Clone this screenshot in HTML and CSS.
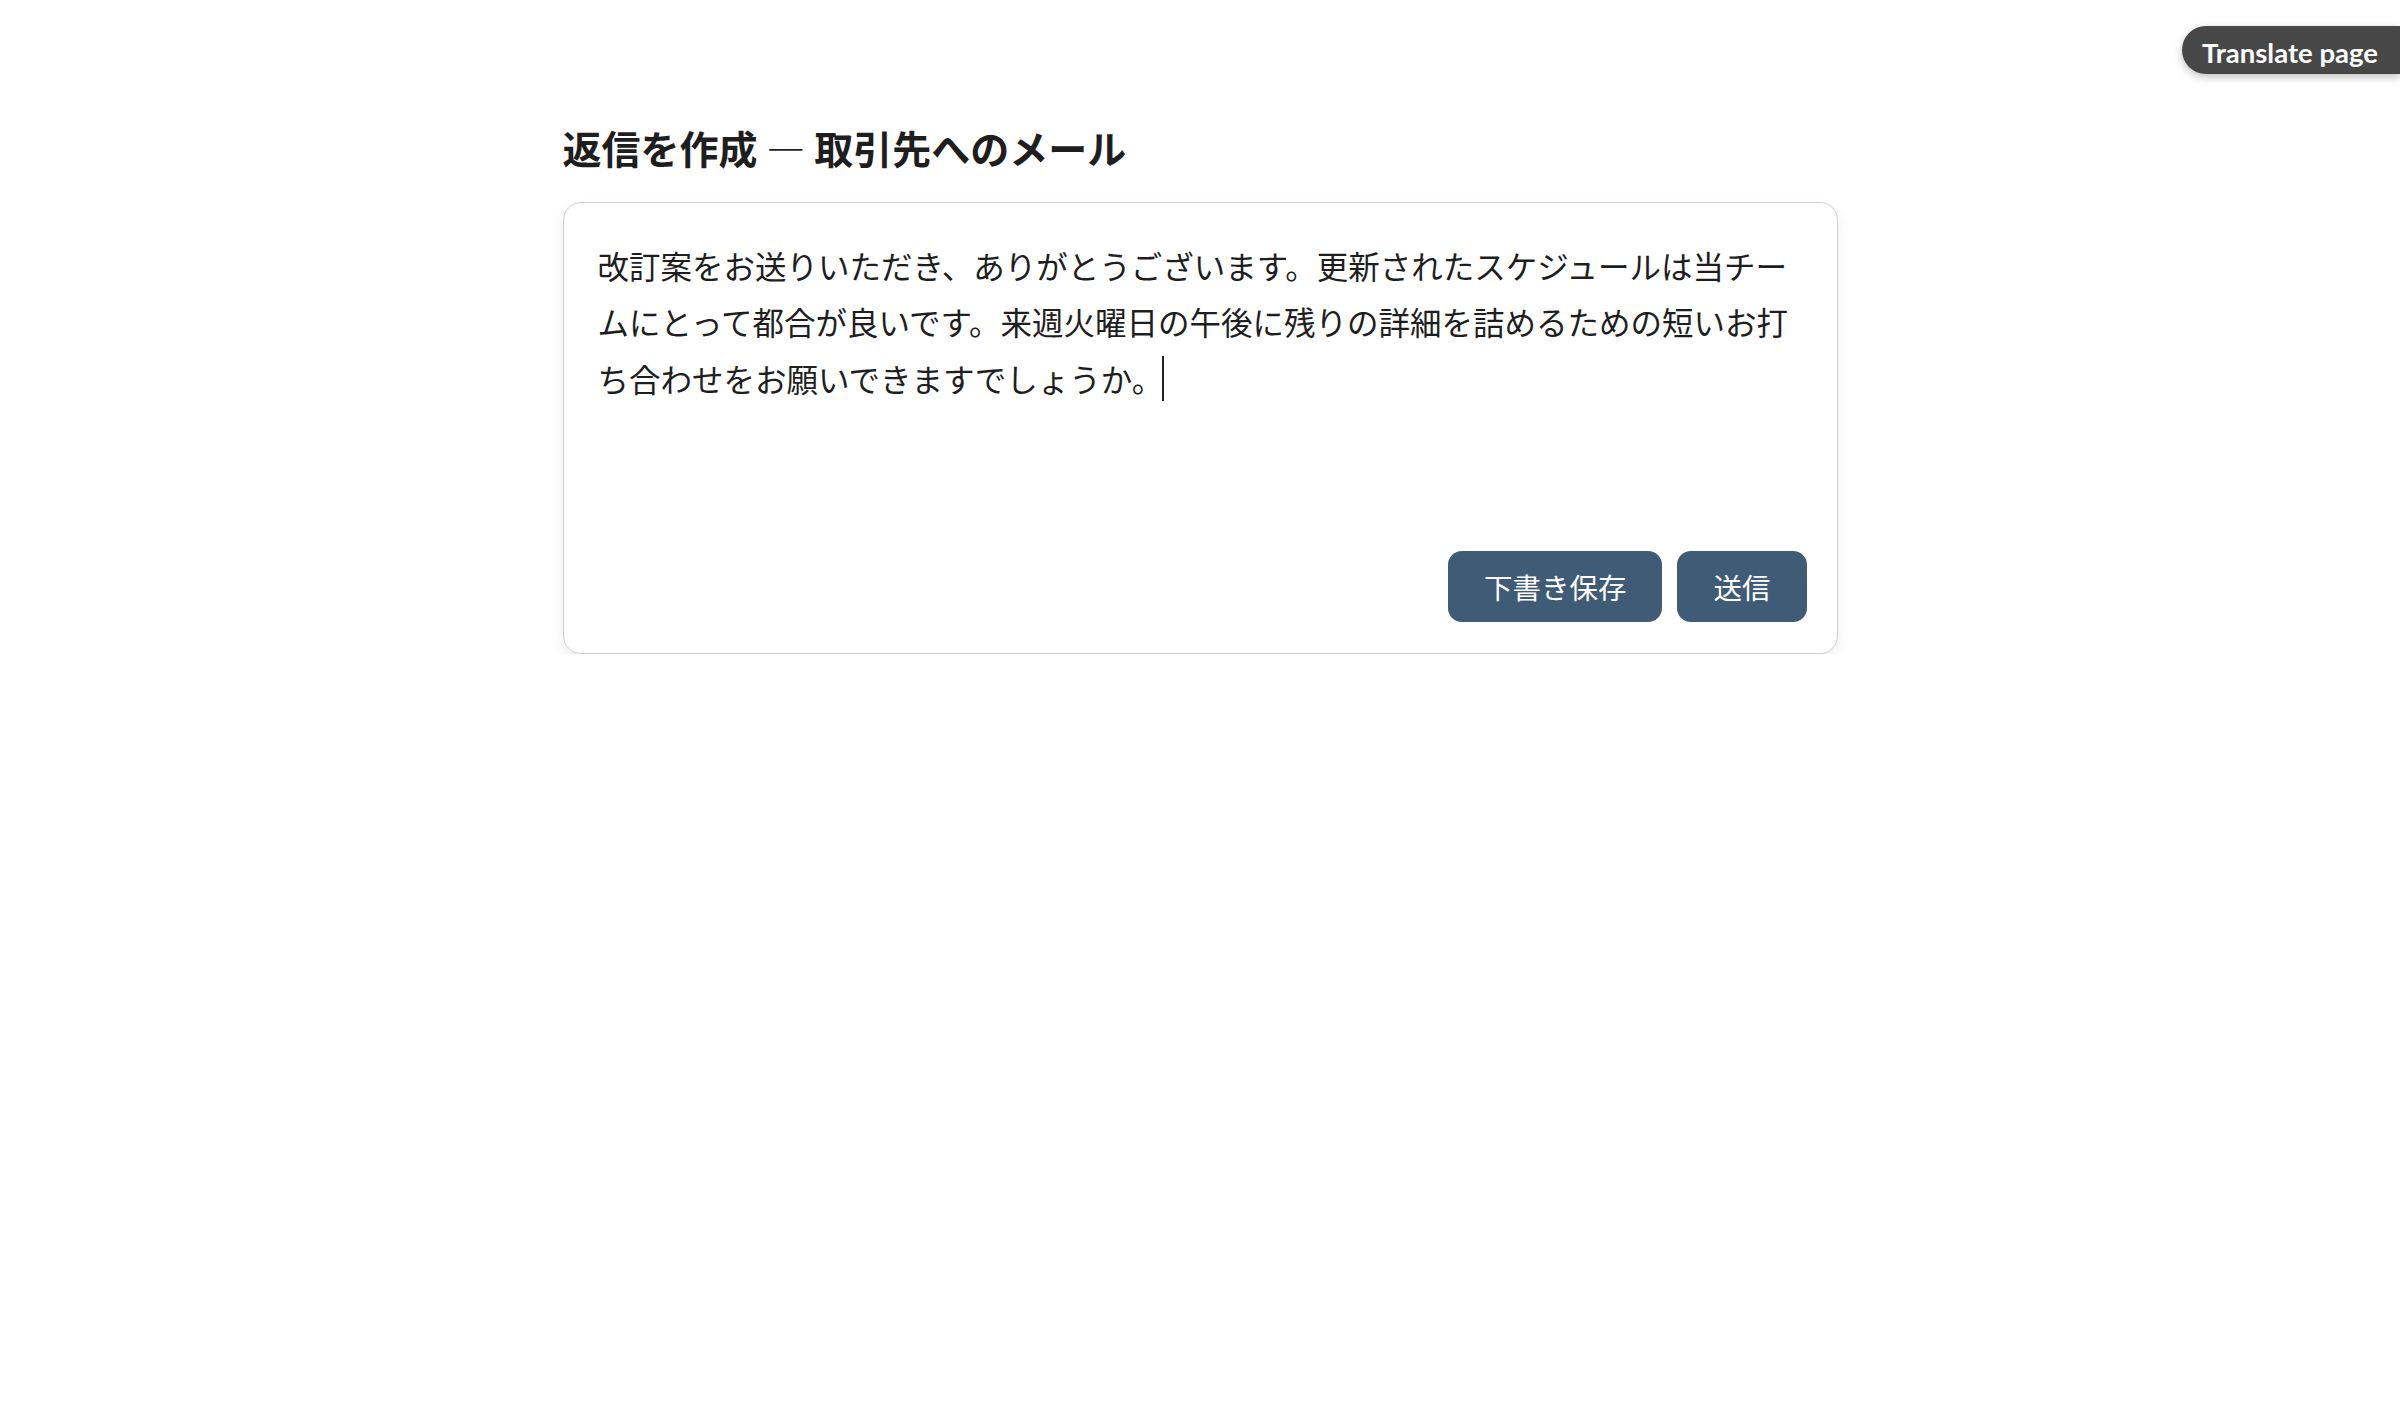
FILE: index.html
```html
<!DOCTYPE html>
<html lang="ja">
<head>
<meta charset="utf-8">
<title>返信を作成</title>
<link rel="stylesheet" href="styles.css">
</head>
<body>
<button class="translate">Translate page</button>
<main class="page">
  <h1 class="title">返信を作成 — 取引先へのメール</h1>
  <section class="card">
    <div class="editor">改訂案をお送りいただき、ありがとうございます。更新されたスケジュールは当チームにとって都合が良いです。来週火曜日の午後に残りの詳細を詰めるための短いお打ち合わせをお願いできますでしょうか。<span class="caret"></span></div>
    <div class="actions">
      <button class="btn">下書き保存</button>
      <button class="btn">送信</button>
    </div>
  </section>
</main>
</body>
</html>
```
FILE: styles.css
```css
html, body {
  margin: 0;
  padding: 0;
  background: #ffffff;
}
body {
  font-family: "Noto Sans CJK JP", "Noto Sans", sans-serif;
  color: #1e1e1e;
}
.translate {
  position: absolute;
  top: 26px;
  right: 0;
  box-sizing: border-box;
  height: 48px;
  padding: 5px 22px 0 20px;
  border: none;
  border-radius: 24px 0 0 24px;
  background: #474747;
  color: #ffffff;
  font-family: Lato, "Noto Sans", sans-serif;
  font-weight: 700;
  font-size: 27.5px;
  line-height: 43px;
  box-shadow: 0 3px 8px rgba(0, 0, 0, 0.25);
}
.page {
  width: 1275px;
  margin: 0 auto;
  padding-top: 124px;
}
.title {
  margin: 0 0 31px 0;
  font-size: 39px;
  line-height: 1.2;
  font-weight: 700;
  color: #1e1e1e;
}
.card {
  box-sizing: border-box;
  width: 1275px;
  border: 1.5px solid #cfcfcf;
  border-radius: 18px;
  padding: 34px 30px 31.5px 34px;
  background: #ffffff;
  box-shadow: 0 6px 14px rgba(0, 0, 0, 0.07);
}
.editor {
  min-height: 300px;
  font-size: 31.5px;
  line-height: 1.8;
  color: #1e1e1e;
}
.caret {
  display: inline-block;
  width: 2px;
  height: 45px;
  margin-left: -1px;
  background: #222;
  vertical-align: -9px;
}
.actions {
  display: flex;
  justify-content: flex-end;
  gap: 15px;
  margin-top: 14px;
}
.btn {
  height: 71px;
  padding: 0 36px;
  border: none;
  border-radius: 14px;
  background: #3f5b76;
  color: #ffffff;
  font-family: "Noto Sans CJK JP", sans-serif;
  font-size: 28.5px;
  line-height: 71px;
}
```
